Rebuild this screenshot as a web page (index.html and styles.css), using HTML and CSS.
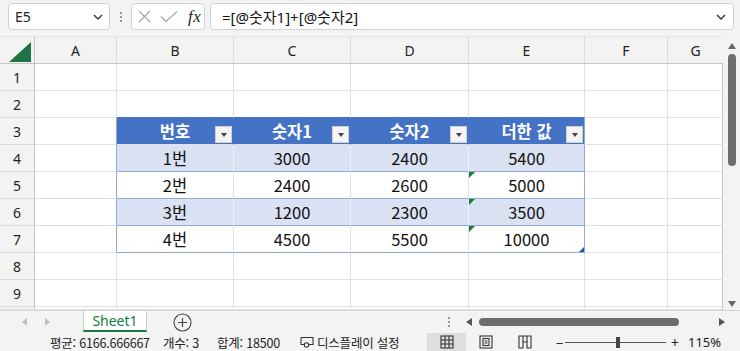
FILE: index.html
```html
<!DOCTYPE html>
<html lang="ko">
<head>
<meta charset="utf-8">
<link rel="stylesheet" href="styles.css">
</head>
<body>
<div class="app">
  <div class="fbar">
    <div class="namebox">
      <span class="nb-text">E5</span>
      <svg class="chev" width="10" height="6" viewBox="0 0 10 6"><path d="M1 1l4 4 4-4" stroke="#333" fill="none" stroke-width="1.4"/></svg>
    </div>
    <div class="grip"><i></i><i></i><i></i></div>
    <div class="fxbox">
      <svg width="13" height="13" viewBox="0 0 13 13"><path d="M1 1L12 12M12 1L1 12" stroke="#a6a6a6" stroke-width="1.2" fill="none"/></svg>
      <svg width="18" height="11" viewBox="0 0 18 11"><path d="M1 5.5l5 5L17 0.5" stroke="#a6a6a6" stroke-width="1.2" fill="none"/></svg>
      <span class="fx">fx</span>
    </div>
    <div class="formula">
      <span class="f-text">=[@숫자1]+[@숫자2]</span>
      <svg class="chev" width="10" height="6" viewBox="0 0 10 6"><path d="M1 1l4 4 4-4" stroke="#333" fill="none" stroke-width="1.4"/></svg>
    </div>
  </div>

  <div class="main">
    <div class="grid">
      <div class="corner"><span class="tri"></span></div>
      <div class="ch">A</div><div class="ch">B</div><div class="ch">C</div><div class="ch">D</div><div class="ch">E</div><div class="ch">F</div><div class="ch">G</div>

      <div class="rh">1</div>
      <div class="c"></div><div class="c"></div><div class="c"></div><div class="c"></div><div class="c"></div><div class="c"></div><div class="c"></div>

      <div class="rh">2</div>
      <div class="c"></div><div class="c top"></div><div class="c top"></div><div class="c top"></div><div class="c top"></div><div class="c"></div><div class="c"></div>

      <div class="rh">3</div>
      <div class="c edge"></div>
      <div class="c th">번호<span class="fbtn"><i></i></span></div>
      <div class="c th">숫자1<span class="fbtn"><i></i></span></div>
      <div class="c th">숫자2<span class="fbtn"><i></i></span></div>
      <div class="c th last">더한 값<span class="fbtn"><i></i></span></div>
      <div class="c"></div><div class="c"></div>

      <div class="rh">4</div>
      <div class="c edge"></div>
      <div class="c t band">1번</div><div class="c t band">3000</div><div class="c t band">2400</div><div class="c t band last">5400</div>
      <div class="c"></div><div class="c"></div>

      <div class="rh">5</div>
      <div class="c edge"></div>
      <div class="c t">2번</div><div class="c t">2400</div><div class="c t">2600</div><div class="c t last err">5000</div>
      <div class="c"></div><div class="c"></div>

      <div class="rh">6</div>
      <div class="c edge"></div>
      <div class="c t band">3번</div><div class="c t band">1200</div><div class="c t band">2300</div><div class="c t band last err">3500</div>
      <div class="c"></div><div class="c"></div>

      <div class="rh">7</div>
      <div class="c edge"></div>
      <div class="c t">4번</div><div class="c t">4500</div><div class="c t">5500</div><div class="c t last err handle">10000</div>
      <div class="c"></div><div class="c"></div>

      <div class="rh">8</div>
      <div class="c"></div><div class="c"></div><div class="c"></div><div class="c"></div><div class="c"></div><div class="c"></div><div class="c"></div>

      <div class="rh">9</div>
      <div class="c"></div><div class="c"></div><div class="c"></div><div class="c"></div><div class="c"></div><div class="c"></div><div class="c"></div>

      <div class="rh"></div>
      <div class="c"></div><div class="c"></div><div class="c"></div><div class="c"></div><div class="c"></div><div class="c"></div><div class="c"></div>
    </div>
    <div class="vscroll">
      <span class="up"></span>
      <span class="vthumb"></span>
      <span class="vspace"></span>
      <span class="down"></span>
    </div>
  </div>

  <div class="tabs">
    <span class="nav nl"></span>
    <span class="nav nr"></span>
    <div class="tab">Sheet1</div>
    <svg class="add" width="19" height="19" viewBox="0 0 19 19"><circle cx="9.5" cy="9.5" r="8.5" stroke="#444" stroke-width="1.1" fill="none"/><path d="M9.5 5v9M5 9.5h9" stroke="#444" stroke-width="1.2"/></svg>
    <div class="hgrip"><i></i><i></i><i></i></div>
    <span class="harrow hl"></span>
    <span class="hthumb"></span>
    <span class="harrow hr"></span>
  </div>

  <div class="status">
    <span class="s-avg">평균: 6166.666667</span>
    <span class="s-cnt">개수: 3</span>
    <span class="s-sum">합계: 18500</span>
    <span class="s-disp">
      <svg width="14" height="12" viewBox="0 0 14 12"><path d="M1 1.5h12v7H8" stroke="#333" fill="none" stroke-width="1.1"/><path d="M1 1.5v7h3" stroke="#333" fill="none" stroke-width="1.1"/><circle cx="6.5" cy="9" r="2.2" stroke="#333" fill="none" stroke-width="1.1"/></svg>
      디스플레이 설정
    </span>
    <span class="vbtn on">
      <svg width="14" height="14" viewBox="0 0 14 14"><rect x="1" y="1" width="12" height="12" fill="none" stroke="#333" stroke-width="1.1"/><path d="M1 5h12M1 9h12M5 1v12M9 1v12" stroke="#333" stroke-width="1.1"/></svg>
    </span>
    <span class="vbtn">
      <svg width="14" height="14" viewBox="0 0 14 14"><rect x="1" y="1" width="12" height="12" fill="none" stroke="#333" stroke-width="1.1"/><rect x="4" y="3.5" width="6" height="7" fill="none" stroke="#333" stroke-width="1.1"/><path d="M5.5 6h3M5.5 8h3" stroke="#333" stroke-width="1"/></svg>
    </span>
    <span class="vbtn">
      <svg width="14" height="14" viewBox="0 0 14 14"><path d="M1 13V1h12v12H9V7H5v6H1z" fill="none" stroke="#333" stroke-width="1.1"/><path d="M5 1v6M9 1v6" stroke="#333" stroke-width="1.1"/></svg>
    </span>
    <span class="zminus">−</span>
    <span class="slider"><i></i></span>
    <span class="zplus">+</span>
    <span class="zval">115%</span>
  </div>
</div>
</body>
</html>
```

FILE: styles.css
```css
* { box-sizing: border-box; }
html, body { margin: 0; padding: 0; }
body {
  width: 740px;
  height: 351px;
  overflow: hidden;
  background: #f3f3f3;
  font-family: "Noto Sans", "Noto Sans CJK KR", sans-serif;
  color: #222;
}
.app { width: 740px; height: 351px; display: flex; flex-direction: column; }

/* formula bar */
.fbar {
  height: 36px;
  display: flex;
  align-items: flex-start;
  padding-top: 3px;
  padding-left: 8px;
}
.namebox {
  width: 102px;
  height: 27px;
  background: #fff;
  border: 1px solid #d2d2d2;
  border-radius: 4px;
  display: flex;
  align-items: center;
  justify-content: space-between;
  padding: 0 6px 0 6px;
  font-size: 14px;
}
.nb-text { font-family: "Noto Sans", sans-serif; color: #222; }
.grip {
  width: 21px;
  height: 27px;
  display: flex;
  flex-direction: column;
  align-items: center;
  justify-content: center;
  gap: 2px;
}
.grip i, .hgrip i { display: block; width: 2px; height: 2px; background: #777; border-radius: 1px; }
.fxbox {
  width: 74px;
  height: 27px;
  background: #fff;
  border: 1px solid #d2d2d2;
  border-radius: 4px;
  display: flex;
  align-items: center;
  padding-left: 6px;
  gap: 9px;
}
.fx {
  font-family: "Liberation Serif", serif;
  font-style: italic;
  font-size: 17px;
  color: #222;
  margin-left: 1px;
  letter-spacing: 0.5px;
}
.formula {
  margin-left: 5px;
  width: 524px;
  height: 27px;
  background: #fff;
  border: 1px solid #d2d2d2;
  border-radius: 4px;
  display: flex;
  align-items: center;
  justify-content: space-between;
  padding: 0 7px 0 11px;
}
.f-text { font-family: "Noto Sans", "Noto Sans CJK KR", sans-serif; font-size: 15px; color: #111; }

/* sheet */
.main { height: 274px; display: flex; }
.grid {
  width: 723px;
  display: grid;
  grid-template-columns: 35px 82px 117px 117px 118px 116px 83px 55px;
  grid-template-rows: 28px repeat(9, 27px) 3px;
  background: #fff;
  overflow: hidden;
}
.corner {
  background: #f3f3f3;
  border-right: 1px solid #c6c6c6;
  border-bottom: 1px solid #c6c6c6;
  position: relative;
  border-top: 1px solid #e6e6e6;
}
.tri {
  position: absolute;
  right: 3px;
  bottom: 1px;
  width: 0; height: 0;
  border-left: 22px solid transparent;
  border-bottom: 20px solid #217346;
}
.ch {
  background: #f3f3f3;
  border-right: 1px solid #dcdcdc;
  border-bottom: 1px solid #c6c6c6;
  border-top: 1px solid #e6e6e6;
  display: flex;
  align-items: center;
  justify-content: center;
  font-size: 14px;
  color: #222;
}
.ch:nth-child(8) { border-right: none; }
.rh {
  background: #f3f3f3;
  border-right: 1px solid #c6c6c6;
  border-bottom: 1px solid #dcdcdc;
  display: flex;
  align-items: center;
  justify-content: center;
  font-size: 14px;
  color: #222;
}
.c {
  border-right: 1px solid #e1e1e1;
  border-bottom: 1px solid #e1e1e1;
  position: relative;
  display: flex;
  align-items: center;
  justify-content: center;
  font-family: "Noto Sans CJK KR", sans-serif;
  font-size: 16.5px;
  color: #111;
}
.c:nth-child(8n) { border-right-color: #c6c6c6; }
.c.edge { border-right-color: #8ea9db; }
.c.top { border-bottom-color: #4472c4; }
.c.th {
  background: #4472c4;
  color: #fff;
  font-weight: bold;
  border-right-color: #4472c4;
  border-bottom-color: #dbe3f3;
}
.c.t { border-bottom-color: #8ea9db; }
.c.band { background: #d9e1f2; border-right-color: #eef2fa; }
.c.last { border-right-color: #8ea9db; }
.fbtn {
  position: absolute;
  right: 1px;
  top: 8px;
  width: 17px;
  height: 17px;
  background: #f4f4f4;
  border: 1px solid #d0d0d0;
  display: flex;
  align-items: center;
  justify-content: center;
}
.fbtn i {
  display: block;
  width: 0; height: 0;
  border-left: 3.5px solid transparent;
  border-right: 3.5px solid transparent;
  border-top: 4px solid #444;
}
.err::before {
  content: "";
  position: absolute;
  left: 0; top: 0;
  width: 0; height: 0;
  border-top: 6px solid #16802a;
  border-right: 6px solid transparent;
}
.handle::after {
  content: "";
  position: absolute;
  right: 0; bottom: 0;
  width: 0; height: 0;
  border-bottom: 5px solid #2f4d9a;
  border-left: 5px solid transparent;
}

/* vertical scroll */
.vscroll {
  width: 17px;
  display: flex;
  flex-direction: column;
  align-items: center;
  padding-top: 7px;
  background: #f3f3f3;
}
.up {
  width: 0; height: 0;
  border-left: 4.5px solid transparent;
  border-right: 4.5px solid transparent;
  border-bottom: 6px solid #666;
}
.vthumb {
  margin-top: 5px;
  width: 8px;
  height: 112px;
  background: #6e6e6e;
  border-radius: 4px;
}
.vspace { flex: 1; }
.down {
  margin-bottom: 3px;
  width: 0; height: 0;
  border-left: 4.5px solid transparent;
  border-right: 4.5px solid transparent;
  border-top: 6px solid #666;
}

/* tab bar */
.tabs {
  height: 23px;
  display: flex;
  align-items: center;
  border-top: 1px solid #d6d6d6;
}
.nav { width: 0; height: 0; border-top: 4.5px solid transparent; border-bottom: 4.5px solid transparent; }
.nl { margin-left: 22px; border-right: 5px solid #bdbdbd; }
.nr { margin-left: 18px; border-left: 5px solid #bdbdbd; }
.tab {
  margin-left: 33px;
  width: 64px;
  height: 21px;
  align-self: flex-start;
  background: #fff;
  border-left: 1px solid #c8c8c8;
  border-right: 1px solid #c8c8c8;
  border-bottom: 2px solid #107c41;
  display: flex;
  align-items: center;
  justify-content: center;
  font-size: 14px;
  color: #107c41;
  padding-bottom: 1px;
}
.add { margin-left: 26px; }
.hgrip {
  margin-left: 255px;
  width: 3px;
  display: flex;
  flex-direction: column;
  align-items: center;
  gap: 2px;
}
.harrow { width: 0; height: 0; border-top: 4.5px solid transparent; border-bottom: 4.5px solid transparent; }
.hl { margin-left: 16px; border-right: 6px solid #555; }
.hthumb { margin-left: 7px; width: 200px; height: 8px; background: #6e6e6e; border-radius: 4px; }
.hr { margin-left: 40px; border-left: 6px solid #555; }

/* status bar */
.status {
  height: 18px;
  display: flex;
  align-items: center;
  font-family: "Noto Sans CJK KR", sans-serif;
  font-size: 12.5px;
  letter-spacing: -0.2px;
  color: #222;
  white-space: nowrap;
}
.s-avg { margin-left: 50px; width: 113px; }
.s-cnt { width: 54px; }
.s-sum { width: 83px; }
.s-disp { width: 127px; display: flex; align-items: center; gap: 3px; }
.vbtn { width: 39px; height: 18px; display: flex; align-items: center; justify-content: center; }
.vbtn.on { background: #dedede; }
.vbtn:nth-of-type(3) { width: 36px; }
.zminus { margin-left: 12px; width: 9px; font-size: 13px; }
.slider { width: 101px; height: 1px; background: #555; position: relative; }
.slider i { position: absolute; left: 51px; top: -5px; width: 4px; height: 11px; background: #444; }
.zplus { margin-left: 5px; width: 17px; font-size: 14px; }
.zval { font-family: "Noto Sans", sans-serif; font-size: 13px; letter-spacing: 0; }
```
